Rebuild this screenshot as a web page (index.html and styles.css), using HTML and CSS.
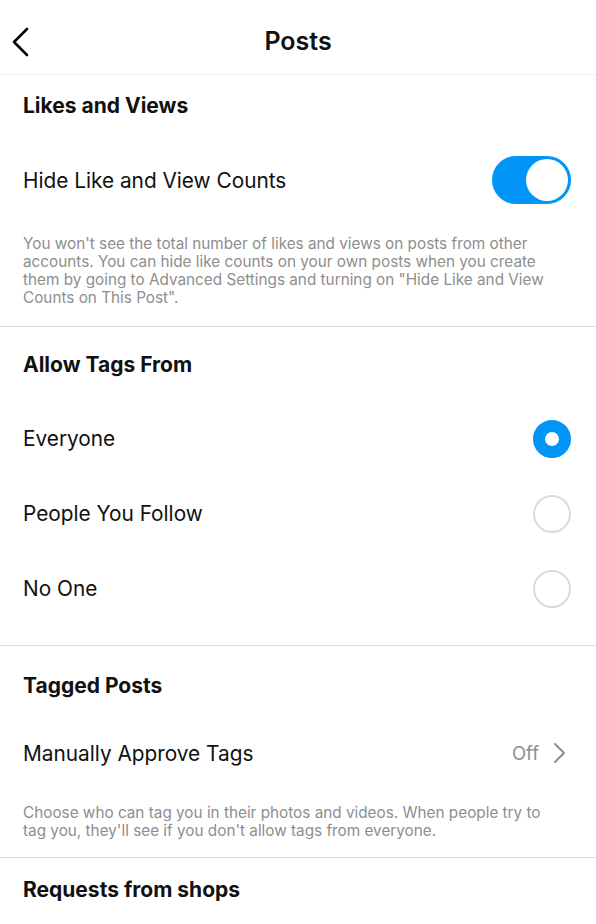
FILE: index.html
```html
<!DOCTYPE html>
<html>

<head>
    <meta charset="UTF-8">
    <title>Posts</title>

    <link rel="stylesheet" href="styles.css">

</head>

<body>

    <div id="screen">
        <div class="topbar">
            <svg class="back" width="20" height="30" viewBox="0 0 20 30">
                <path d="M17 2 L4 15 L17 28" fill="none" stroke="#000" stroke-width="2.6" stroke-linecap="round" stroke-linejoin="round" />
            </svg>
            <h1 class="title">Posts</h1>
        </div>

        <div class="section">
            <div class="section-title likes-title">Likes and Views</div>
            <div class="row toggle-row">
                <span>Hide Like and View Counts</span>
                <div class="toggle on"><div class="knob"></div></div>
            </div>
            <p class="note likes-note">You won't see the total number of likes and views on posts from other accounts. You can hide like counts on your own posts when you create them by going to Advanced Settings and turning on "Hide Like and View Counts on This Post".</p>
        </div>

        <div class="section tags">
            <div class="section-title tags-title">Allow Tags From</div>
            <div class="row option">
                <span>Everyone</span>
                <div class="radio checked"></div>
            </div>
            <div class="row option">
                <span>People You Follow</span>
                <div class="radio"></div>
            </div>
            <div class="row option">
                <span>No One</span>
                <div class="radio"></div>
            </div>
        </div>

        <div class="section">
            <div class="section-title tagged-title">Tagged Posts</div>
            <div class="row approve-row">
                <span>Manually Approve Tags</span>
                <div class="value">
                    <span class="off">Off</span>
                    <svg width="14" height="22" viewBox="0 0 14 22">
                        <path d="M2 2 L11 11 L2 20" fill="none" stroke="#8e8e8e" stroke-width="2" stroke-linecap="round" stroke-linejoin="round" />
                    </svg>
                </div>
            </div>
            <p class="note tagged-note">Choose who can tag you in their photos and videos. When people try to tag you, they'll see if you don't allow tags from everyone.</p>
        </div>

        <div class="section last">
            <div class="section-title shops-title">Requests from shops</div>
        </div>
    </div>

</body>

</html>
```

FILE: styles.css
```css
body {
    margin: 0;
    background: #fff;
    font-family: Inter, "Liberation Sans", Arial, sans-serif;
    color: #111;
}

#screen {
    width: 596px;
    height: 924px;
    overflow: hidden;
}

.topbar {
    height: 75px;
    box-sizing: border-box;
    padding-top: 7px;
    border-bottom: 1px solid #efefef;
    display: flex;
    align-items: center;
    justify-content: center;
    position: relative;
}

    .topbar .back {
        position: absolute;
        left: 10px;
        top: 27px;
    }

.title {
    margin: 0;
    font-size: 25px;
    font-weight: 600;
}

.section {
    border-bottom: 1px solid #dbdbdb;
    padding: 0 23px 0 23px;
}

    .section.last {
        border-bottom: none;
    }

.section-title {
    display: flex;
    align-items: center;
    font-size: 21px;
    font-weight: 700;
}

.likes-title {
    height: 61px;
}

.tags-title {
    height: 74px;
}

.tagged-title {
    height: 78px;
}

.shops-title {
    height: 62px;
}

.row {
    display: flex;
    align-items: center;
    justify-content: space-between;
    font-size: 20.8px;
}

.toggle-row {
    height: 88px;
}

.option {
    height: 75px;
}

.tags {
    padding-bottom: 19px;
}

.approve-row {
    height: 58px;
}

.toggle {
    width: 79px;
    height: 48px;
    border-radius: 24px;
    background: #0095f6;
    display: flex;
    align-items: center;
    justify-content: flex-end;
    padding: 0 3px;
    box-sizing: border-box;
    margin-right: 2px;
}

    .toggle .knob {
        width: 42px;
        height: 42px;
        border-radius: 50%;
        background: #fff;
    }

.radio {
    width: 34px;
    height: 34px;
    border: 2px solid #dbdbdb;
    border-radius: 50%;
    margin-right: 2px;
}

    .radio.checked {
        border: 12px solid #0095f6;
        width: 14px;
        height: 14px;
        background: #fff;
    }

.value {
    display: flex;
    align-items: center;
    gap: 14px;
    margin-right: 6px;
}

.off {
    color: #8e8e8e;
    font-size: 18.5px;
}

.note {
    margin: 0;
    color: #8e8e8e;
    font-size: 15.3px;
    line-height: 18px;
}

.likes-note {
    padding: 11px 20px 19px 0;
}

.tagged-note {
    padding: 22px 20px 17px 0;
}
```
